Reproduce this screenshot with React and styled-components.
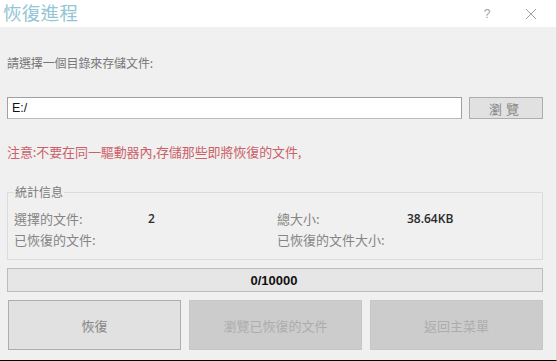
import React from "react";
import styled, { createGlobalStyle } from "styled-components";

const GlobalStyle = createGlobalStyle`
  html, body {
    margin: 0;
    padding: 0;
    background: #f0f0f0;
  }
  * {
    box-sizing: border-box;
  }
`;

const cjk = `"Noto Sans CJK TC", "Noto Sans", sans-serif`;

const Window = styled.div`
  width: 557px;
  height: 361px;
  background: #f0f0f0;
  border-bottom: 1px solid #000;
  border-right: 1px solid #d8d8d8;
  display: flex;
  flex-direction: column;
  font-family: ${cjk};
  overflow: hidden;
`;

const TitleBar = styled.div`
  height: 27px;
  background: #fff;
  display: flex;
  align-items: center;
  padding-left: 3px;
  flex-shrink: 0;
`;

const Title = styled.div`
  flex: 1;
  font-size: 18.5px;
  line-height: 22px;
  color: #93c6d5;
  margin-top: -4px;
  letter-spacing: 0.3px;
`;

const TitleButton = styled.span`
  width: ${(p) => p.w}px;
  color: #a0a0a0;
  font-family: "Liberation Sans", Arial, sans-serif;
  font-size: 12px;
  line-height: 14px;
  display: flex;
  justify-content: center;
`;

const Body = styled.div`
  padding: 0 13px 0 7px;
  display: flex;
  flex-direction: column;
`;

const Label = styled.div`
  margin-top: 28px;
  font-size: 12px;
  line-height: 16px;
  color: #777;
  letter-spacing: -0.1px;
`;

const PathRow = styled.div`
  margin-top: 26px;
  display: flex;
  gap: 7px;
  height: 22px;
`;

const PathInput = styled.div`
  flex: 1;
  background: #fff;
  border: 1px solid #a0a0a0;
  border-bottom-color: #bababa;
  font-family: "Liberation Sans", Arial, sans-serif;
  font-size: 12.5px;
  color: #111;
  display: flex;
  align-items: center;
  padding-left: 4px;
`;

const Button = styled.div`
  display: flex;
  align-items: center;
  justify-content: center;
  background: ${(p) => (p.disabled ? "#cccccc" : "#e1e1e1")};
  border: 1px solid ${(p) => (p.disabled ? "#c6c6c6" : "#adadad")};
  color: ${(p) => (p.disabled ? "#acacac" : "#858585")};
  font-size: 13px;
  letter-spacing: ${(p) => p.spacing || 0}px;
`;

const BrowseButton = styled(Button)`
  width: 74px;
  height: 22px;
`;

const Warning = styled.div`
  margin-top: 24px;
  font-size: 13px;
  line-height: 18px;
  color: #cb6068;
  letter-spacing: -0.1px;
`;

const Group = styled.fieldset`
  margin: 23px 0 0 0;
  padding: 8px 6px 9px 6px;
  border: 1px solid #dcdcdc;
  min-width: 0;
`;

const Legend = styled.legend`
  font-size: 12px;
  line-height: 16px;
  color: #7a7a7a;
  padding: 0 1px;
  margin-left: 0;
`;

const StatsGrid = styled.div`
  display: grid;
  grid-template-columns: 134px 129px 130px 1fr;
  grid-auto-rows: 21px;
  align-items: center;
`;

const StatLabel = styled.span`
  font-size: 13px;
  color: #858585;
  white-space: nowrap;
`;

const StatValue = styled.span`
  font-family: "Open Sans", "Liberation Sans", sans-serif;
  font-size: 12px;
  font-weight: 600;
  color: #2a2a2a;
`;

const Progress = styled.div`
  margin-top: 8px;
  height: 24px;
  background: #e6e6e6;
  border: 1px solid #bcbcbc;
  display: flex;
  align-items: center;
  justify-content: center;
  font-family: "Liberation Sans", Arial, sans-serif;
  font-weight: bold;
  font-size: 13px;
  color: #111;
  padding-right: 2px;
`;

const ActionRow = styled.div`
  margin-top: 8px;
  margin-left: 1px;
  display: grid;
  grid-template-columns: repeat(3, 1fr);
  gap: 8px;
  height: 50px;
`;

export default function App() {
  return (
    <>
      <GlobalStyle />
      <Window>
        <TitleBar>
          <Title>恢復進程</Title>
          <TitleButton w={38}>?</TitleButton>
          <TitleButton w={50}>
            <svg width="12" height="12" viewBox="0 0 12 12">
              <path
                d="M1 1 L11 11 M11 1 L1 11"
                stroke="#a0a0a0"
                strokeWidth="1"
                fill="none"
              />
            </svg>
          </TitleButton>
        </TitleBar>
        <Body>
          <Label>請選擇一個目錄來存儲文件:</Label>
          <PathRow>
            <PathInput>E:/</PathInput>
            <BrowseButton spacing={4}>瀏覽</BrowseButton>
          </PathRow>
          <Warning>注意:不要在同一驅動器內,存儲那些即將恢復的文件,</Warning>
          <Group>
            <Legend>統計信息</Legend>
            <StatsGrid>
              <StatLabel>選擇的文件:</StatLabel>
              <StatValue>2</StatValue>
              <StatLabel>總大小:</StatLabel>
              <StatValue>38.64KB</StatValue>
              <StatLabel>已恢復的文件:</StatLabel>
              <StatValue />
              <StatLabel>已恢復的文件大小:</StatLabel>
              <StatValue />
            </StatsGrid>
          </Group>
          <Progress>0/10000</Progress>
          <ActionRow>
            <Button>恢復</Button>
            <Button disabled>瀏覽已恢復的文件</Button>
            <Button disabled>返回主菜單</Button>
          </ActionRow>
        </Body>
      </Window>
    </>
  );
}
